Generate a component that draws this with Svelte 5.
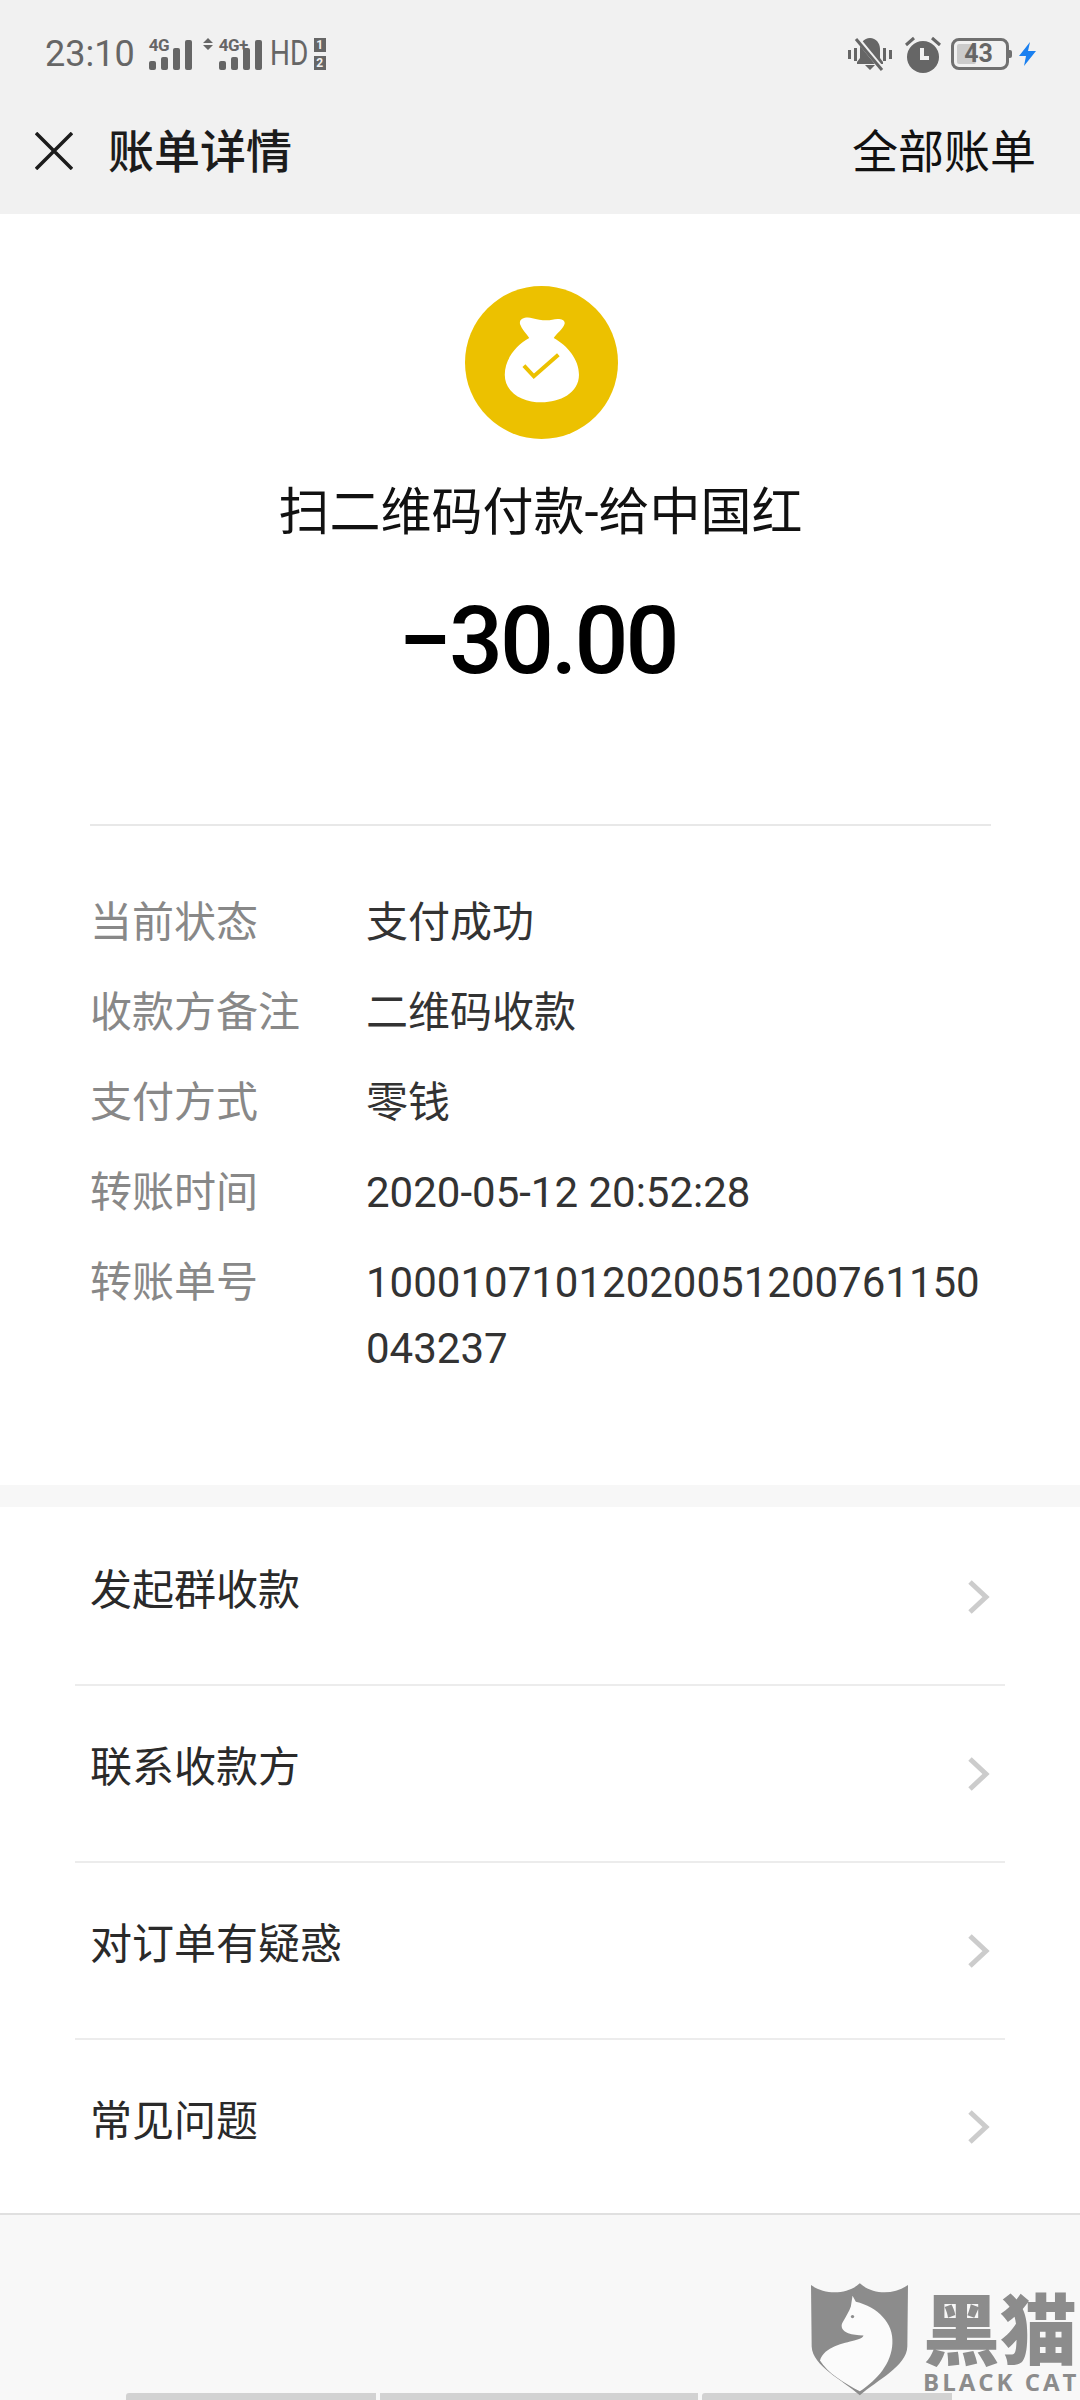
<script>
  const details = [
    { label: '当前状态', value: '支付成功' },
    { label: '收款方备注', value: '二维码收款' },
    { label: '支付方式', value: '零钱' },
    { label: '转账时间', value: '2020-05-12 20:52:28' },
    { label: '转账单号', value: '10001071012020051200761150043237' }
  ];
  const actions = ['发起群收款', '联系收款方', '对订单有疑惑', '常见问题'];
  const signal = [9, 13, 22, 30];
</script>

<div class="page">
  <header class="top">
    <div class="status">
      <div class="status-left">
        <span class="time">23:10</span>
        <div class="net">
          <span class="net-label">4G</span>
          <div class="bars">
            {#each signal as h}<i style="height: {h}px"></i>{/each}
          </div>
        </div>
        <svg class="updown" viewBox="0 0 10 12" width="10" height="12"><path d="M5 0 L10 5 H0Z M5 12 L0 7 H10Z" fill="#666" /></svg>
        <div class="net">
          <span class="net-label">4G+</span>
          <div class="bars">
            {#each signal as h}<i style="height: {h}px"></i>{/each}
          </div>
        </div>
        <span class="hd">HD</span>
        <div class="sims"><b>1</b><b>2</b></div>
      </div>
      <div class="status-right">
        <svg width="46" height="34" viewBox="0 0 46 34">
          <path d="M1 13h3v9H1z M42 13h3v9h-3z M7 11h3v13H7z M36 11h3v13h-3z" fill="#666" />
          <path d="M23 1c-6 0-10 5-10 11v9l-3 4v2h26v-2l-3-4v-9c0-6-4-11-10-11z M18 28h10l-5 5z" fill="#666" />
          <path d="M9 0l27 33" stroke="#f1f1f1" stroke-width="5" />
          <path d="M9 2l26 31" stroke="#666" stroke-width="3" />
        </svg>
        <svg width="36" height="37" viewBox="0 0 36 37">
          <circle cx="18" cy="21" r="16" fill="#666" />
          <path d="M17 12v10h7" stroke="#f1f1f1" stroke-width="4" fill="none" />
          <path d="M1 9l8-7 M35 9l-8-7" stroke="#666" stroke-width="3" />
        </svg>
        <div class="battery">
          <div class="level"></div>
          <span>43</span>
        </div>
        <svg class="bolt" width="17" height="24" viewBox="0 0 17 24"><path d="M11 0 L0 14 H7 L5 24 L17 9 H9Z" fill="#1a80f0" /></svg>
      </div>
    </div>
    <nav class="bar">
      <svg class="close" width="38" height="38" viewBox="0 0 38 38"><path d="M1 1l36 36 M37 1l-36 36" stroke="#1c1c1c" stroke-width="3.500" /></svg>
      <h1>账单详情</h1>
      <span class="all">全部账单</span>
    </nav>
  </header>

  <section class="hero">
    <svg class="coin" width="153" height="153" viewBox="0 0 100 100">
      <circle cx="50" cy="50" r="50" fill="#ecc100" />
      <path d="M36 25 C35 21 40 20 44 21 C48 22 53 23 57 22 C62 21 66 22 65 25 C64 28 60 31 58 34 C67 39 74.500 48 74.500 58 C74.500 70 62 76 50 76 C38 76 26 70 26 58 C26 48 33 39 42 34 C40 31 37 28 36 25Z" fill="#fff" />
      <path d="M38.500 52 L45 59 L61 45" stroke="#ecc100" stroke-width="2.600" fill="none" />
    </svg>
    <div class="title">扫二维码付款-给中国红</div>
    <div class="amount">−30.00</div>
  </section>

  <section class="details">
    {#each details as row}
      <div class="row">
        <span class="label">{row.label}</span>
        <span class="value">{row.value}</span>
      </div>
    {/each}
  </section>

  <div class="band"></div>

  <section class="actions">
    {#each actions as item}
      <div class="action">
        <span>{item}</span>
        <svg width="22" height="34" viewBox="0 0 22 34"><path d="M2 2l16 15-16 15" stroke="#cccccc" stroke-width="5" fill="none" /></svg>
      </div>
    {/each}
  </section>

  <footer class="foot">
    <div class="keys"><i></i><i></i><i></i></div>
    <div class="mark">
      <svg width="97" height="113" viewBox="0 0 292 338">
        <path d="M0 5 C40 35 110 35 147 0 C185 35 250 35 292 5 L290 190 C288 250 200 290 147 337 C95 290 5 250 2 190Z" fill="#8c8c8c" />
        <path d="M125 37 L135 55 C200 70 250 120 245 180 C243 240 200 290 147 325 C100 300 50 270 27 232 C40 190 100 180 130 172 C145 168 155 165 158 157 C140 155 125 155 112 150 C95 145 88 130 95 118 C105 100 115 85 120 70Z" fill="#fbfbfb" />
        <circle cx="125" cy="100" r="5" fill="#8c8c8c" />
      </svg>
      <div class="brand">
        <span class="cn">黑猫</span>
        <span class="en">BLACK CAT</span>
      </div>
    </div>
  </footer>
</div>

<style>
  :global(body) {
    margin: 0;
    background: #f8f8f8;
  }

  .page {
    width: 1080px;
    height: 2400px;
    display: flex;
    flex-direction: column;
    overflow: hidden;
    font-family: Roboto, "Noto Sans CJK SC", sans-serif;
    background: #fff;
  }

  .top {
    height: 214px;
    background: #f1f1f1;
  }

  .status {
    height: 108px;
    display: flex;
    justify-content: space-between;
    align-items: center;
    padding: 0 44px 0 45px;
    color: #666;
  }

  .status-left,
  .status-right {
    display: flex;
    align-items: center;
  }

  .time {
    font-size: 36px;
    line-height: 40px;
    margin-right: 14px;
  }

  .net {
    position: relative;
    height: 31px;
  }

  .net-label {
    position: absolute;
    left: 0;
    top: -1px;
    font-size: 17px;
    line-height: 14px;
    font-weight: 700;
    letter-spacing: -0.5px;
  }

  .bars {
    display: flex;
    align-items: flex-end;
    gap: 5px;
    height: 31px;
  }

  .bars i {
    width: 7px;
    background: #666;
    border-radius: 2px;
  }

  .updown {
    margin: -20px 6px 0 11px;
  }

  .hd {
    font-size: 35px;
    line-height: 40px;
    margin-left: 8px;
    transform: scaleX(0.8);
    transform-origin: left center;
    width: 41px;
  }

  .sims {
    display: flex;
    flex-direction: column;
    gap: 4px;
    margin-left: 3px;
  }

  .sims b {
    width: 12px;
    height: 14px;
    background: #666;
    color: #f1f1f1;
    font-size: 12px;
    line-height: 14px;
    text-align: center;
  }

  .status-right {
    gap: 12px;
  }

  .status-right svg {
    display: block;
  }

  .battery {
    position: relative;
    box-sizing: border-box;
    width: 58px;
    height: 32px;
    border: 3px solid #707070;
    border-radius: 8px;
    margin-left: -2px;
    display: flex;
    align-items: center;
    justify-content: center;
  }

  .battery::after {
    content: '';
    position: absolute;
    right: -6px;
    top: 9px;
    width: 3px;
    height: 8px;
    background: #707070;
    border-radius: 0 2px 2px 0;
  }

  .level {
    position: absolute;
    left: 3px;
    top: 3px;
    bottom: 3px;
    width: 19px;
    background: #cbcbcb;
    border-radius: 2px;
  }

  .battery span {
    position: relative;
    font-size: 25px;
    line-height: 26px;
    font-weight: 700;
    margin-right: 3px;
  }

  .bolt {
    margin-left: -2px;
  }

  .bar {
    height: 88px;
    display: flex;
    align-items: center;
    padding: 0 44px 0 35px;
  }

  .close {
    margin-right: 35px;
    margin-bottom: 3px;
  }

  h1 {
    margin: 0;
    font-size: 46px;
    line-height: 64px;
    font-weight: 500;
    color: #1c1c1c;
    flex: 1;
  }

  .all {
    font-size: 46px;
    line-height: 64px;
    color: #111;
  }

  .hero {
    display: flex;
    flex-direction: column;
    align-items: center;
    padding-top: 72px;
    margin: 0 89px 0 90px;
    border-bottom: 2px solid #e8e8e8;
    padding-bottom: 129px;
  }

  .coin {
    display: block;
    margin-left: 2px;
  }

  .title {
    margin-top: 39px;
    font-size: 51px;
    line-height: 70px;
    color: #111;
    white-space: nowrap;
  }

  .amount {
    margin-top: 38px;
    margin-bottom: -1px;
    margin-right: 6px;
    font-size: 95px;
    line-height: 110px;
    font-weight: 500;
    letter-spacing: -3px;
    color: #000;
  }

  .details {
    display: flex;
    flex-direction: column;
    gap: 24px;
    padding: 64px 89px 103px 90px;
  }

  .row {
    display: flex;
    font-size: 42px;
    line-height: 66px;
  }

  .label {
    width: 276px;
    flex: none;
    color: #888;
  }

  .value {
    flex: 1;
    color: #333;
    word-break: break-all;
  }

  .band {
    height: 22px;
    background: #f7f7f7;
  }

  .actions {
    padding-top: 2px;
    border-bottom: 2px solid #e0e0e0;
  }

  .action {
    height: 175px;
    margin: 0 75px;
    padding: 0 15px;
    display: flex;
    justify-content: space-between;
    align-items: center;
    border-bottom: 2px solid #ececec;
    font-size: 42px;
    line-height: 60px;
    color: #2a2a2a;
  }

  .action:last-child {
    border-bottom: 0;
    height: 173px;
  }

  .action span {
    padding-bottom: 11px;
  }

  .action:last-child span {
    padding-bottom: 9px;
  }

  .foot {
    position: relative;
    flex: 1;
    display: flex;
    flex-direction: column;
    justify-content: flex-end;
    background: #f8f8f8;
  }

  .keys {
    display: flex;
    gap: 4px;
    padding-left: 126px;
    height: 7px;
  }

  .keys i {
    height: 7px;
    width: 250px;
    background: #d2d2d2;
    border-radius: 3px 0 0 0;
  }

  .keys i:nth-child(2) {
    width: 318px;
    border-radius: 0;
  }

  .mark {
    position: absolute;
    left: 811px;
    top: 68px;
    display: flex;
    gap: 15px;
  }

  .mark svg {
    display: block;
  }

  .brand {
    display: flex;
    flex-direction: column;
    color: #8c8c8c;
    width: 154px;
  }

  .cn {
    font-family: "Noto Sans CJK SC", sans-serif;
    font-size: 77px;
    line-height: 76px;
    font-weight: 900;
    white-space: nowrap;
    margin-top: 5px;
  }

  .en {
    font-family: "Open Sans", sans-serif;
    font-size: 24px;
    line-height: 24px;
    font-weight: 700;
    letter-spacing: 3px;
    white-space: nowrap;
    margin-top: 6px;
  }
</style>
